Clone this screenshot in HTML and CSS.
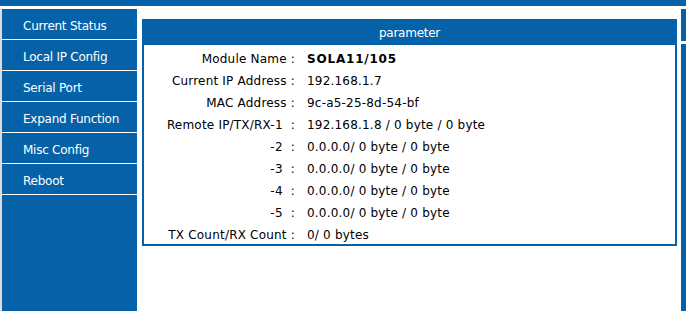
FILE: index.html
```html
<!DOCTYPE html>
<html lang="en">
<head>
    <meta charset="UTF-8">
    <meta name="viewport" content="width=device-width, initial-scale=1.0">
    <title>Current Status</title>
    <link rel="stylesheet" href="styles.css">
</head>
<body>
    <div class="topbar"></div>
    <div class="layout">
        <div class="side">
            <a class="menu-item" href="#">Current Status</a>
            <a class="menu-item" href="#">Local IP Config</a>
            <a class="menu-item" href="#">Serial Port</a>
            <a class="menu-item" href="#">Expand Function</a>
            <a class="menu-item" href="#">Misc Config</a>
            <a class="menu-item" href="#">Reboot</a>
        </div>
        <div class="main">
            <div class="panel">
                <div class="panel-head">parameter</div>
                <div class="panel-body">
                    <table class="params">
                        <tr><td class="label">Module Name :</td><td class="value"><b>SOLA11/105</b></td></tr>
                        <tr><td class="label">Current IP Address :</td><td class="value">192.168.1.7</td></tr>
                        <tr><td class="label">MAC Address :</td><td class="value">9c-a5-25-8d-54-bf</td></tr>
                        <tr><td class="label">Remote IP/TX/RX-1&nbsp;&nbsp;:</td><td class="value">192.168.1.8 / 0 byte / 0 byte</td></tr>
                        <tr><td class="label">-2&nbsp;&nbsp;:</td><td class="value">0.0.0.0/ 0 byte / 0 byte</td></tr>
                        <tr><td class="label">-3&nbsp;&nbsp;:</td><td class="value">0.0.0.0/ 0 byte / 0 byte</td></tr>
                        <tr><td class="label">-4&nbsp;&nbsp;:</td><td class="value">0.0.0.0/ 0 byte / 0 byte</td></tr>
                        <tr><td class="label">-5&nbsp;&nbsp;:</td><td class="value">0.0.0.0/ 0 byte / 0 byte</td></tr>
                        <tr><td class="label">TX Count/RX Count :</td><td class="value">0/ 0 bytes</td></tr>
                    </table>
                </div>
            </div>
        </div>
        <div class="strip">
            <div class="strip-top"></div>
            <div class="strip-rest"></div>
        </div>
    </div>
</body>
</html>
```

FILE: styles.css
```css
body {
    margin: 0;
    font-family: "DejaVu Sans", Verdana, sans-serif;
    background-color: #ffffff;
    overflow: hidden;
}

.topbar {
    height: 6px;
    background-color: #0662a8;
    margin-bottom: 3px;
}

.layout {
    display: flex;
    height: calc(100vh - 9px);
    border-left: 2px solid #dcdcdc;
}

/* left menu */
.side {
    width: 135px;
    background-color: #0662a8;
    display: flex;
    flex-direction: column;
}

.menu-item {
    display: block;
    height: 26px;
    line-height: 26px;
    padding: 4px 0 0 21px;
    border-bottom: 1px solid #ffffff;
    color: #ffffff;
    font-size: 12px;
    letter-spacing: -0.25px;
    text-decoration: none;
}

.main {
    flex: 1;
    padding: 10px 4px 0 5px;
}

.panel {
    border: 2px solid #0662a8;
    border-top: none;
}

.panel-head {
    height: 26px;
    line-height: 28px;
    background-color: #0662a8;
    color: #ffffff;
    text-align: center;
    font-size: 12px;
    letter-spacing: -0.25px;
}

.panel-body {
    padding-top: 1px;
}

.params {
    width: 100%;
    border-collapse: collapse;
    font-size: 12px;
    letter-spacing: 0.2px;
    color: #000000;
}

.params td {
    height: 18px;
    padding: 4px 0 0 0;
    white-space: nowrap;
}

.params .label {
    width: 151px;
    text-align: right;
}

.params .value {
    padding-left: 12px;
}

.params b {
    letter-spacing: 0.8px;
}

/* right frame edge */
.strip {
    width: 5px;
    display: flex;
    flex-direction: column;
    gap: 3px;
}

.strip-top {
    height: 32px;
    background-color: #0662a8;
}

.strip-rest {
    flex: 1;
    background-color: #0662a8;
}
```
